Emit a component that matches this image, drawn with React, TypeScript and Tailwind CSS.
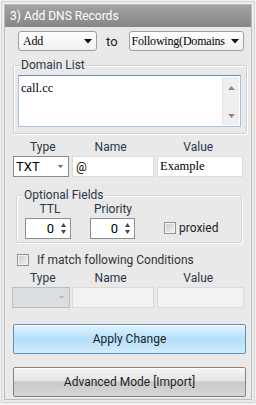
import React from "react";

const sans = "font-['Roboto','Noto_Sans',sans-serif]";
const serif = "font-['Liberation_Serif',serif]";

function Combo({ label, className }: { label: string; className: string }) {
  return (
    <div
      className={`flex items-center justify-between h-[20px] rounded-[3px] border border-[#a0a0a0] bg-gradient-to-b from-[#ffffff] to-[#f1f1f1] pl-[2px] pr-[4px] ${className}`}
    >
      <span className={`${serif} text-[12px] tracking-[-0.2px] leading-none text-black whitespace-nowrap`}>{label}</span>
      <svg width="8" height="5" viewBox="0 0 8 5" className="shrink-0 ml-[2px]">
        <path d="M0 0 L8 0 L4 4.5 Z" fill="#111" />
      </svg>
    </div>
  );
}

function Spin({ className }: { className: string }) {
  return (
    <div className={`flex items-center h-[21px] border border-[#8e8e8e] bg-white ${className}`}>
      <span className={`${sans} flex-1 text-right text-[13px] leading-none text-black pr-[5px]`}>0</span>
      <div className="flex flex-col items-center justify-center gap-[3px] w-[8px] mr-[3px]">
        <svg width="5" height="4" viewBox="0 0 5 4">
          <path d="M0 4 L5 4 L2.5 0 Z" fill="#444" />
        </svg>
        <svg width="5" height="4" viewBox="0 0 5 4">
          <path d="M0 0 L5 0 L2.5 4 Z" fill="#444" />
        </svg>
      </div>
    </div>
  );
}

function Check() {
  return (
    <div className="w-[12px] h-[12px] border border-[#939393] bg-[#f4f4f4] p-[1px] shrink-0">
      <div className="w-full h-full bg-gradient-to-br from-[#cdcdcd] to-[#f2f2f2]" />
    </div>
  );
}

function LabelRow({ className }: { className: string }) {
  const cls = `${sans} text-[12px] leading-none text-[#2a3646] text-center`;
  return (
    <div className={`flex items-center h-[12px] pl-[5px] ${className}`}>
      <span className={`${cls} w-[66px]`}>Type</span>
      <span className={`${cls} w-[70px]`}>Name</span>
      <span className={`${cls} w-[106px]`}>Value</span>
    </div>
  );
}

export default function App() {
  return (
    <div className="w-[256px] h-[405px] bg-[#f3f3f3] p-[1px]">
      <div className="h-[402px] border border-[#d4d4d4] bg-[#ececec] pl-[2px] pt-[2px] pr-[2px]">
        <div className="h-[396px] border border-[#bdbdbd] bg-[#e9e9e9] flex flex-col">
          <div className="h-[22px] bg-gradient-to-b from-[#a3a3a3] to-[#868686] flex items-center pl-[5px]">
            <span className={`${sans} text-[12px] text-white leading-none`}>3) Add DNS Records</span>
          </div>

          <div className="flex items-center mt-[4px] h-[20px]">
            <Combo label="Add" className="ml-[13px] w-[79px] pl-[4px]" />
            <span className={`${sans} text-[13px] text-[#222] leading-none ml-[9px]`}>to</span>
            <Combo label="Following(Domains" className="ml-[11px] w-[115px]" />
          </div>

          <div className="relative mt-[14px] ml-[8px] w-[234px] h-[69px] border border-[#d0d0d0] shadow-[inset_1px_1px_0_#ffffff,1px_1px_0_#ffffff] rounded-[2px]">
            <span className={`${sans} absolute -top-[7px] left-[6px] bg-[#e9e9e9] px-[1px] text-[12px] leading-none text-[#2a3646]`}>
              Domain List
            </span>
            <div className="mt-[9px] ml-[4px] w-[223px] h-[52px] border border-[#a8c3e0] border-t-[#5e8fc4] bg-white flex">
              <div className={`${serif} flex-1 text-[12.5px] leading-none pt-[6px] pl-[2px] text-black`}>call.cc</div>
              <div className="w-[17px] mr-[1px] my-[1px] bg-[#efefef] border-l border-[#e4e4e4] flex flex-col items-center justify-between pt-[9px] pb-[7px]">
                <svg width="7" height="4" viewBox="0 0 7 4">
                  <path d="M0 4 L7 4 L3.5 0 Z" fill="#8a8a8a" />
                </svg>
                <svg width="7" height="4" viewBox="0 0 7 4">
                  <path d="M0 0 L7 0 L3.5 4 Z" fill="#8a8a8a" />
                </svg>
              </div>
            </div>
          </div>

          <LabelRow className="mt-[7px]" />

          <div className="flex mt-[3px] h-[21px]">
            <div className="ml-[8px] w-[56px] h-[21px] border border-[#8a8a8a] bg-white flex items-center justify-between pl-[2px] pr-[5px]">
              <span className={`${sans} text-[13px] leading-none text-black`}>TXT</span>
              <svg width="5" height="3" viewBox="0 0 5 3">
                <path d="M0 0 L5 0 L2.5 3 Z" fill="#666" />
              </svg>
            </div>
            <div className="ml-[3px] w-[82px] h-[21px] border border-[#dcdcdc] bg-white flex items-center pl-[3px]">
              <span className={`${sans} text-[12px] leading-none text-black`}>@</span>
            </div>
            <div className="ml-[3px] w-[86px] h-[21px] border border-[#dcdcdc] bg-white flex items-center pl-[2px]">
              <span className={`${serif} text-[12.5px] leading-none text-black`}>Example</span>
            </div>
          </div>

          <div className="relative mt-[18px] ml-[11px] w-[226px] h-[48px] border border-[#d6d6d6] shadow-[inset_1px_1px_0_#ffffff,1px_1px_0_#ffffff] rounded-[2px]">
            <span className={`${sans} absolute -top-[7px] left-[6px] bg-[#e9e9e9] px-[1px] text-[12px] leading-none text-[#2a3646]`}>
              Optional Fields
            </span>
            <div className="flex mt-[7px] h-[12px] items-center">
              <span className={`${sans} text-[12px] leading-none text-[#2a3646] text-center w-[50px] ml-[8px]`}>TTL</span>
              <span className={`${sans} text-[12px] leading-none text-[#2a3646] text-center w-[60px] ml-[8px]`}>Priority</span>
            </div>
            <div className="flex items-center mt-[3px]">
              <Spin className="ml-[8px] w-[46px]" />
              <Spin className="ml-[19px] w-[45px]" />
              <div className="ml-[29px] flex items-center gap-[3px] -mt-[1px]">
                <Check />
                <span className={`${sans} text-[12px] leading-none text-[#222]`}>proxied</span>
              </div>
            </div>
          </div>

          <div className="flex items-center mt-[11px] ml-[12px] h-[12px] gap-[8px]">
            <Check />
            <span className={`${sans} text-[12px] leading-none text-[#333]`}>If match following Conditions</span>
          </div>

          <LabelRow className="mt-[6px]" />

          <div className="flex mt-[3px] h-[21px]">
            <div className="ml-[7px] w-[58px] h-[21px] border border-[#bdbdbd] bg-[#dadde2] flex items-center justify-end pr-[5px]">
              <svg width="5" height="3" viewBox="0 0 5 3">
                <path d="M0 0 L5 0 L2.5 3 Z" fill="#b5b5b5" />
              </svg>
            </div>
            <div className="ml-[2px] w-[82px] h-[21px] border border-[#dadada] bg-[#f2f2f2]" />
            <div className="ml-[3px] w-[87px] h-[21px] border border-[#dadada] bg-[#f2f2f2]" />
          </div>

          <div
            className={`${sans} mt-[16px] ml-[8px] w-[233px] h-[30px] rounded-[2px] border border-[#5f8fbf] bg-gradient-to-b from-[#e5f4fd] via-[#b3dffb] to-[#d3edfb] flex items-center justify-center text-[12px] text-[#1f1f1f] leading-none shadow-[inset_0_1px_0_#ffffff]`}
          >
            Apply Change
          </div>

          <div
            className={`${sans} mt-[13px] ml-[8px] w-[233px] h-[30px] rounded-[2px] border border-[#858585] bg-[linear-gradient(to_bottom,#f4f4f4_0%,#e6e6e6_45%,#c9c9c9_50%,#d6d6d6_100%)] flex items-center justify-center text-[12px] text-[#1f1f1f] leading-none shadow-[inset_0_1px_0_#ffffff]`}
          >
            Advanced Mode [Import]
          </div>
        </div>
      </div>
    </div>
  );
}
